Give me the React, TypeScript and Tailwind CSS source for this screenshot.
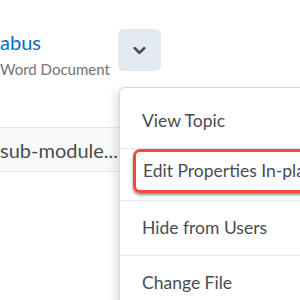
import { ChevronDown } from "lucide-react";

const items = ["View Topic", "Edit Properties In-place", "Hide from Users", "Change File"];

function Menu() {
  return (
    <div className="absolute left-[119px] top-[87px] w-[240px] rounded-[6px] border border-[#d3d9e3] bg-white pt-[6px] shadow-[-4px_4px_10px_rgba(0,0,0,0.12)]">
      <ul>
        {items.map((label, i) => (
          <li key={label} className={i > 0 ? "border-t border-[#e6eaf0]" : ""}>
            {i === 1 ? (
              <div className="pb-[7px]">
                <div className="ml-[13px] rounded-[7px] border-[3px] border-[#ef4a3f] py-[9px] pl-[7px] shadow-[0_2px_3px_rgba(0,0,0,0.45)]">
                  <span className="block whitespace-nowrap text-[17.5px] leading-[20px] text-[#494c4e]">{label}</span>
                </div>
              </div>
            ) : (
              <div className="whitespace-nowrap px-[22px] py-[16px] text-[17.5px] leading-[22px] text-[#494c4e]">{label}</div>
            )}
          </li>
        ))}
      </ul>
    </div>
  );
}

export default function App() {
  return (
    <div className="relative h-[300px] w-[300px] overflow-hidden bg-white font-['Lato','Liberation_Sans',sans-serif]">
      <div className="flex items-start gap-[10px] pt-[29px]">
        <div className="w-[108px] pt-[1px]">
          <p className="text-[20px] leading-[24px] text-[#006fbf]">abus</p>
          <p className="mt-[6px] whitespace-nowrap text-[15px] leading-[18px] text-[#6e7477]">Word Document</p>
        </div>
        <button className="flex h-[42px] w-[43px] items-center justify-center rounded-[6px] bg-[#e3e9f1] text-[#494c4e]">
          <ChevronDown size={19} strokeWidth={3.4} />
        </button>
      </div>
      <div className="mt-[49px] flex h-[45px] items-center border-y border-[#e3e9f1] bg-[#f9fafb]">
        <span className="whitespace-nowrap text-[20px] text-[#494c4e]">sub-module...</span>
      </div>
      <Menu />
    </div>
  );
}
